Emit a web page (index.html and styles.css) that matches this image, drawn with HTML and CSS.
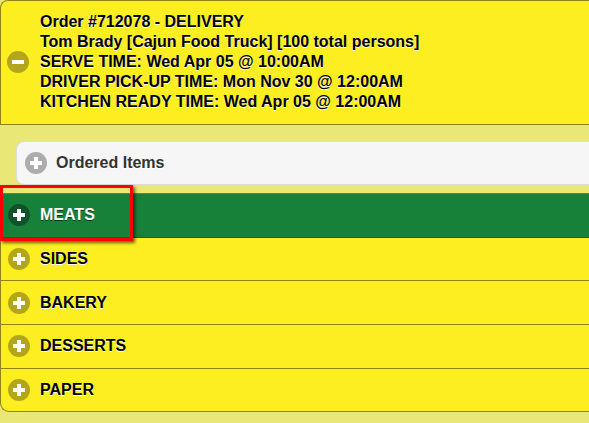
FILE: index.html
```html
<!DOCTYPE html>
<html>
<head>
<meta charset="utf-8">
<link rel="stylesheet" href="styles.css">
</head>
<body>
<div class="page">
  <div class="order">
    <span class="icon">
      <svg width="22" height="22" viewBox="0 0 22 22"><circle cx="11" cy="11" r="11" fill="#b3a51c"/><rect x="5" y="9" width="12" height="4" fill="#fff"/></svg>
    </span>
    <div class="order-text">
      <div>Order #712078 - DELIVERY</div>
      <div>Tom Brady [Cajun Food Truck] [100 total persons]</div>
      <div>SERVE TIME: Wed Apr 05 @ 10:00AM</div>
      <div>DRIVER PICK-UP TIME: Mon Nov 30 @ 12:00AM</div>
      <div>KITCHEN READY TIME: Wed Apr 05 @ 12:00AM</div>
    </div>
  </div>

  <div class="ordered">
    <span class="icon">
      <svg width="22" height="22" viewBox="0 0 22 22"><circle cx="11" cy="11" r="11" fill="#acacac"/><rect x="5" y="9" width="12" height="4" fill="#fff"/><rect x="9" y="5" width="4" height="12" fill="#fff"/></svg>
    </span>
    <span class="ordered-label">Ordered Items</span>
  </div>

  <div class="cats">
    <ul class="cat-list">
      <li class="cat active">
        <span class="icon"><svg width="22" height="22" viewBox="0 0 22 22"><circle cx="11" cy="11" r="11" fill="#10522a"/><rect x="5" y="9" width="12" height="4" fill="#fff"/><rect x="9" y="5" width="4" height="12" fill="#fff"/></svg></span>
        <span class="cat-label">MEATS</span>
      </li>
      <li class="cat">
        <span class="icon"><svg width="22" height="22" viewBox="0 0 22 22"><circle cx="11" cy="11" r="11" fill="#b3a51c"/><rect x="5" y="9" width="12" height="4" fill="#fff"/><rect x="9" y="5" width="4" height="12" fill="#fff"/></svg></span>
        <span class="cat-label">SIDES</span>
      </li>
      <li class="cat">
        <span class="icon"><svg width="22" height="22" viewBox="0 0 22 22"><circle cx="11" cy="11" r="11" fill="#b3a51c"/><rect x="5" y="9" width="12" height="4" fill="#fff"/><rect x="9" y="5" width="4" height="12" fill="#fff"/></svg></span>
        <span class="cat-label">BAKERY</span>
      </li>
      <li class="cat">
        <span class="icon"><svg width="22" height="22" viewBox="0 0 22 22"><circle cx="11" cy="11" r="11" fill="#b3a51c"/><rect x="5" y="9" width="12" height="4" fill="#fff"/><rect x="9" y="5" width="4" height="12" fill="#fff"/></svg></span>
        <span class="cat-label">DESSERTS</span>
      </li>
      <li class="cat">
        <span class="icon"><svg width="22" height="22" viewBox="0 0 22 22"><circle cx="11" cy="11" r="11" fill="#b3a51c"/><rect x="5" y="9" width="12" height="4" fill="#fff"/><rect x="9" y="5" width="4" height="12" fill="#fff"/></svg></span>
        <span class="cat-label">PAPER</span>
      </li>
    </ul>
    <div class="highlight"></div>
  </div>
</div>
</body>
</html>
```

FILE: styles.css
```css
html, body {
  margin: 0;
  padding: 0;
  overflow: hidden;
}
body {
  background: #e9e775;
  font-family: "Liberation Sans", Arial, sans-serif;
  font-size: 16px;
  font-weight: bold;
  width: 589px;
  height: 423px;
}
.icon {
  display: block;
  width: 22px;
  height: 22px;
  flex: none;
}
.icon svg {
  display: block;
}
.order {
  display: flex;
  align-items: center;
  background: #fdee21;
  border: 1px solid #8c8418;
  border-right: none;
  border-radius: 8px 0 0 0;
  padding: 11px 0 12px 6px;
  color: #000;
  text-shadow: 0 1px 0 #fff;
  line-height: 20px;
}
.order-text {
  margin-left: 11px;
}
.ordered {
  display: flex;
  align-items: center;
  margin: 16px 0 8px 16px;
  height: 42px;
  background: #f6f6f6;
  border: 1px solid #dcdcdc;
  border-right: none;
  border-radius: 8px 0 0 8px;
  padding-left: 8px;
  color: #333;
  text-shadow: 0 1px 0 #fff;
}
.ordered-label {
  margin-left: 9px;
}
.cats {
  position: relative;
}
.cat-list {
  list-style: none;
  margin: 0;
  padding: 0;
  background: #fdee21;
  border-left: 1px solid #8c8418;
  border-bottom: 1px solid #8c8418;
  border-radius: 0 0 0 9px;
}
.cat {
  display: flex;
  align-items: center;
  height: 42.7px;
  padding-left: 7px;
  border-bottom: 1px solid #8c8418;
  color: #000;
  text-shadow: 0 1px 0 #fff;
}
.cat:last-child {
  border-bottom: none;
}
.cat.active {
  background: #178039;
  border-top: 1px solid #23a548;
  border-bottom: 1px solid #3d4f18;
  color: #fff;
  text-shadow: 0 1px 0 #0b3a1b;
  margin-left: -1px;
  padding-left: 8px;
}
.cat-label {
  margin-left: 10px;
}
.highlight {
  position: absolute;
  top: -8px;
  left: 0;
  width: 133px;
  height: 56px;
  box-sizing: border-box;
  border: 3px solid #ff0000;
  box-shadow: 2px 2px 3px rgba(0, 0, 0, 0.6);
  pointer-events: none;
}
```
